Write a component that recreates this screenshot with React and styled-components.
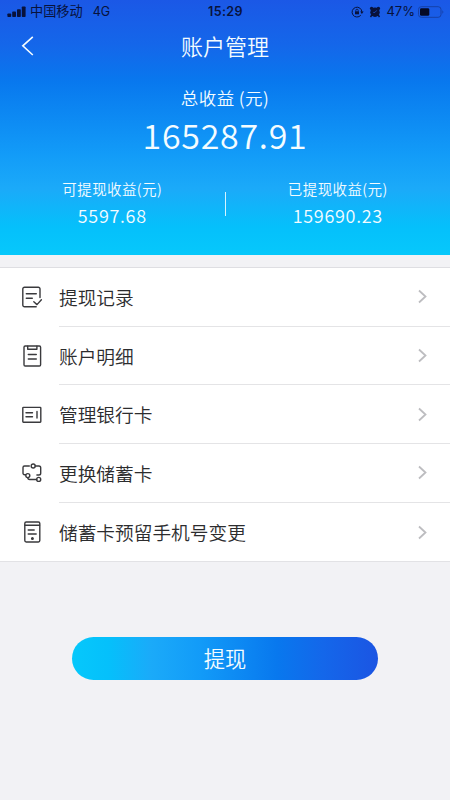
import React from 'react';
import styled, { createGlobalStyle } from 'styled-components';

const GlobalStyle = createGlobalStyle`
  * {
    box-sizing: border-box;
  }
  body {
    margin: 0;
    background: #f2f2f5;
    font-family: 'Noto Sans CJK SC', sans-serif;
    font-weight: 350;
  }
`;

const Page = styled.div`
  width: 100%;
  min-height: 800px;
  background: #f2f2f5;
`;

const Header = styled.header`
  height: 255px;
  color: #f4fcff;
  background: linear-gradient(180deg, #1b58e6 0%, #1467ea 18%, #0878ee 32%, #129bf8 60%, #1baaf9 74%, #05c0fb 89%, #06c8fb 100%);
`;

const StatusBar = styled.div`
  display: grid;
  grid-template-columns: 1fr auto 1fr;
  align-items: center;
  height: 23px;
  padding: 0 6px 0 7px;
  color: #08123c;
  font-family: 'Inter', 'Noto Sans CJK SC', sans-serif;
  font-size: 12.5px;
  font-weight: 400;
  line-height: 23px;
`;

const StatusSide = styled.div`
  display: flex;
  align-items: center;
  justify-content: ${(props) => (props.$end ? 'flex-end' : 'flex-start')};
`;

const Carrier = styled.span`
  margin-left: 4px;
  font-size: 13.2px;
`;

const Network = styled.span`
  margin-left: 10px;
  font-size: 12.5px;
`;

const Clock = styled.span`
  font-weight: 600;
  font-size: 12.5px;
  letter-spacing: 0.4px;
`;

const AlarmBox = styled.span`
  display: flex;
  margin-left: 5px;
`;

const Percent = styled.span`
  margin: 0 3px 0 5px;
  font-size: 13px;
`;

const NavBar = styled.div`
  display: grid;
  grid-template-columns: 60px 1fr 60px;
  align-items: center;
  height: 44px;
`;

const BackButton = styled.button`
  display: flex;
  height: 44px;
  padding: 13px 0 0 21px;
  border: 0;
  background: none;
  color: inherit;
`;

const Title = styled.h1`
  margin: 0;
  text-align: center;
  font-size: 22px;
  font-weight: 350;
  line-height: 44px;
`;

const Total = styled.div`
  padding-top: 18px;
  text-align: center;
`;

const TotalLabel = styled.div`
  font-size: 17.5px;
  line-height: 26px;
  letter-spacing: 0.4px;
`;

const TotalAmount = styled.div`
  font-size: 34px;
  line-height: 48px;
  letter-spacing: 0.7px;
`;

const Split = styled.div`
  display: flex;
  align-items: center;
  padding-top: 18px;
`;

const SplitItem = styled.div`
  flex: 1;
  text-align: center;
`;

const SplitLabel = styled.div`
  font-size: 14.5px;
  line-height: 24px;
  letter-spacing: 0.4px;
`;

const SplitAmount = styled.div`
  font-size: 18px;
  line-height: 28px;
  letter-spacing: 0.7px;
`;

const SplitLine = styled.div`
  width: 1px;
  height: 24px;
  margin-top: 2px;
  background: #d5f4ff;
`;

const Menu = styled.div`
  margin-top: 12px;
  border-top: 1px solid #dedee2;
  border-bottom: 1px solid #e2e2e5;
  background: #fff;
`;

const MenuItem = styled.div`
  display: flex;
  align-items: center;
  height: 58.7px;
  padding-left: 20px;
`;

const IconBox = styled.div`
  display: flex;
  width: 39px;
  color: #3a3a3d;
`;

const MenuBody = styled.div`
  flex: 1;
  display: flex;
  align-items: center;
  justify-content: space-between;
  height: 100%;
  padding-right: 22px;
  border-bottom: ${(props) => (props.$last ? 'none' : '1px solid #e4e4e6')};
  color: #2c2c2e;
  font-size: 18.7px;
`;

const MenuLabel = styled.span`
  padding-bottom: 1px;
`;

const Footer = styled.div`
  display: flex;
  justify-content: center;
  padding-top: 75px;
`;

const WithdrawButton = styled.button`
  width: 306px;
  height: 43px;
  padding: 0 0 2px;
  border: 0;
  border-radius: 22px;
  color: #f4fcff;
  background: linear-gradient(90deg, #06c8fb 0%, #05c0fb 12%, #1baaf9 26%, #129bf8 42%, #0878ee 67%, #1467ea 82%, #1b55e3 100%);
  font-family: inherit;
  font-size: 21.3px;
  font-weight: 350;
  line-height: 41px;
`;

const Icon = ({ children }) => (
  <svg width="24" height="24" viewBox="0 0 24 24" fill="none" stroke="currentColor" strokeWidth="1.4" strokeLinecap="round" strokeLinejoin="round">
    {children}
  </svg>
);

const RecordIcon = () => (
  <Icon>
    <path d="M16.2 21.8H4.5a1.7 1.7 0 0 1-1.7-1.7V3.9a1.7 1.7 0 0 1 1.7-1.7h13.8A1.7 1.7 0 0 1 20 3.9v8.6" />
    <path d="M6.3 8.7h10M6.3 13.3h6M13.8 16.8l3.2 2.8 4.4-4.8" />
  </Icon>
);

const DetailIcon = () => (
  <Icon>
    <rect x="4" y="2" width="16.6" height="20" rx="1.2" />
    <path d="M7.7 2.3v3h9.2v-3M8.3 10.5h8M8.3 15h8" />
  </Icon>
);

const CardIcon = () => (
  <Icon>
    <rect x="2.8" y="4.4" width="18" height="14.8" rx="0.6" />
    <path d="M6 9.7h6.5M6 13.8h6.5M17 8.5v6.6" />
  </Icon>
);

const SwapIcon = () => (
  <Icon>
    <circle cx="13.2" cy="5" r="2" />
    <circle cx="7.8" cy="14.6" r="2" />
    <circle cx="18.7" cy="18.4" r="2" />
    <path d="M9.3 5H4.5A1.5 1.5 0 0 0 3 6.5v5.8a1.5 1.5 0 0 0 1.5 1.5h1.2M15.2 5h3.7a1.8 1.8 0 0 1 1.8 1.8v5.4a1.8 1.8 0 0 1-1.8 1.8h-2M7.8 16.6c0 1.2.7 1.9 1.9 1.9h7" />
  </Icon>
);

const PhoneIcon = () => (
  <Icon>
    <rect x="4.8" y="2" width="15" height="20" rx="1.4" />
    <path d="M5 5.2h14.5M8.2 10h6M8.2 14h8" />
    <circle cx="12.4" cy="18.5" r="0.8" fill="currentColor" />
  </Icon>
);

const Arrow = () => (
  <svg width="11" height="15" viewBox="0 0 11 15" fill="none" stroke="#bdbdc0" strokeWidth="1.8">
    <path d="M2 1.5l6.5 6L2 13.5" />
  </svg>
);

const SignalIcon = () => (
  <svg width="19" height="12" viewBox="0 0 19 12" fill="currentColor">
    <rect x="0.4" y="7.4" width="3.8" height="3.6" rx="0.8" />
    <rect x="5.2" y="5.6" width="3.8" height="5.4" rx="0.8" />
    <rect x="10" y="3.2" width="3.8" height="7.8" rx="0.8" />
    <rect x="14.8" y="0.4" width="3.8" height="10.6" rx="0.8" />
  </svg>
);

const LockIcon = () => (
  <svg width="13" height="12" viewBox="0 0 13 12" fill="none" stroke="currentColor">
    <path d="M9.8 9.2A4.9 4.9 0 1 1 10.9 6" />
    <path d="M9.2 5.6h3.4L10.9 8z" fill="currentColor" stroke="none" />
    <rect x="4" y="5.3" width="4" height="3" fill="currentColor" stroke="none" />
    <path d="M4.8 5.3V4.4a1.2 1.2 0 0 1 2.4 0v.9" strokeWidth="0.8" />
  </svg>
);

const AlarmIcon = () => (
  <svg width="12" height="12" viewBox="0 0 12 12" fill="currentColor">
    <circle cx="6" cy="6.3" r="4.7" />
    <circle cx="2.6" cy="2.4" r="1.7" />
    <circle cx="9.4" cy="2.4" r="1.7" />
    <path d="M2.8 9l-1.3 2M9.2 9l1.3 2" stroke="currentColor" strokeWidth="1.4" />
    <path d="M4.2 6.4H6l1.7-2" fill="none" stroke="#1b58e6" strokeWidth="0.7" />
  </svg>
);

const BatteryIcon = () => (
  <svg width="26" height="12" viewBox="0 0 26 12" fill="none">
    <rect x="0.5" y="0.7" width="22.5" height="10.6" rx="2.8" stroke="#1640a8" />
    <rect x="2" y="2.2" width="9.3" height="7.6" rx="1.4" fill="#050a25" />
    <path d="M24.4 4.2c1.2.7 1.2 2.9 0 3.6z" fill="#1640a8" />
  </svg>
);

const items = [
  { label: '提现记录', icon: RecordIcon },
  { label: '账户明细', icon: DetailIcon },
  { label: '管理银行卡', icon: CardIcon },
  { label: '更换储蓄卡', icon: SwapIcon },
  { label: '储蓄卡预留手机号变更', icon: PhoneIcon },
];

function App() {
  return (
    <Page>
      <GlobalStyle />
      <Header>
        <StatusBar>
          <StatusSide>
            <SignalIcon />
            <Carrier>中国移动</Carrier>
            <Network>4G</Network>
          </StatusSide>
          <Clock>15:29</Clock>
          <StatusSide $end>
            <LockIcon />
            <AlarmBox>
              <AlarmIcon />
            </AlarmBox>
            <Percent>47%</Percent>
            <BatteryIcon />
          </StatusSide>
        </StatusBar>
        <NavBar>
          <BackButton aria-label="返回">
            <svg width="13" height="20" viewBox="0 0 13 20" fill="none" stroke="currentColor" strokeWidth="1.6">
              <path d="M11.8 0.8L1.8 9.8l10 9.2" />
            </svg>
          </BackButton>
          <Title>账户管理</Title>
        </NavBar>
        <Total>
          <TotalLabel>总收益 (元)</TotalLabel>
          <TotalAmount>165287.91</TotalAmount>
        </Total>
        <Split>
          <SplitItem>
            <SplitLabel>可提现收益(元)</SplitLabel>
            <SplitAmount>5597.68</SplitAmount>
          </SplitItem>
          <SplitLine />
          <SplitItem>
            <SplitLabel>已提现收益(元)</SplitLabel>
            <SplitAmount>159690.23</SplitAmount>
          </SplitItem>
        </Split>
      </Header>
      <Menu>
        {items.map(({ label, icon: ItemIcon }, i) => (
          <MenuItem key={label}>
            <IconBox>
              <ItemIcon />
            </IconBox>
            <MenuBody $last={i === items.length - 1}>
              <MenuLabel>{label}</MenuLabel>
              <Arrow />
            </MenuBody>
          </MenuItem>
        ))}
      </Menu>
      <Footer>
        <WithdrawButton>提现</WithdrawButton>
      </Footer>
    </Page>
  );
}

export default App;
